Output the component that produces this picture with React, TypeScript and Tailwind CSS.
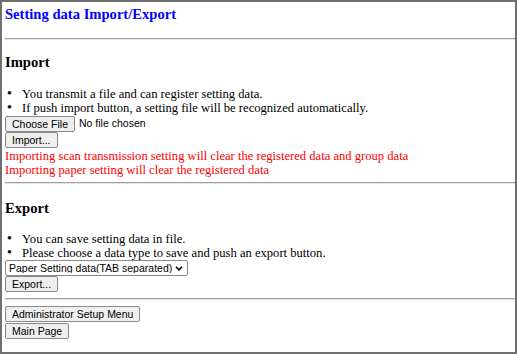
// Setting data Import/Export page
const btn =
  "block h-[16px] px-[6px] bg-[#efefef] border border-[#8a8a8a] rounded-[2px] text-[10.5px] leading-none text-black font-['Liberation_Sans',Arial,sans-serif]";

const Rule = () => <div className="h-0 border-t border-t-[#a0a0a0] border-b border-b-[#e4e4e4]" />;

const Bullets = ({ items }: { items: string[] }) => (
  <ul>
    {items.map((t) => (
      <li key={t} className="flex h-[14px] leading-[14px]">
        <span className="w-[17px] pl-[2px] text-[14px]">•</span>
        <span>{t}</span>
      </li>
    ))}
  </ul>
);

const App = () => {
  return (
    <div className="w-[517px] h-[354px] overflow-hidden bg-white border-2 border-[#6f6f6f] pl-[3px] text-[12.6px] text-black font-['Liberation_Serif','Times_New_Roman',serif]">
      {/* Page title */}
      <h1 className="mt-[4px] h-[17px] leading-[17px] text-[14.6px] font-bold text-[#0000ff]">
        Setting data Import/Export
      </h1>
      <div className="mt-[15px]">
        <Rule />
      </div>

      {/* Import section */}
      <h2 className="mt-[14px] h-[17px] leading-[17px] text-[14.6px] font-bold">Import</h2>
      <div className="mt-[16px]">
        <Bullets
          items={[
            "You transmit a file and can register setting data.",
            "If push import button, a setting file will be recognized automatically.",
          ]}
        />
      </div>
      <div className="mt-[1px] flex items-center gap-[4px]">
        <button className={btn}>Choose File</button>
        <span className="text-[10.5px] font-['Liberation_Sans',Arial,sans-serif]">No file chosen</span>
      </div>
      <button className={btn}>Import...</button>
      <div className="mt-[1px] text-[#ff0000] leading-[14px]">
        <p>Importing scan transmission setting will clear the registered data and group data</p>
        <p>Importing paper setting will clear the registered data</p>
      </div>
      <div className="mt-[5px]">
        <Rule />
      </div>

      {/* Export section */}
      <h2 className="mt-[16px] h-[17px] leading-[17px] text-[14.6px] font-bold">Export</h2>
      <div className="mt-[15px]">
        <Bullets
          items={[
            "You can save setting data in file.",
            "Please choose a data type to save and push an export button.",
          ]}
        />
      </div>
      <div className="relative mt-0 w-[183px]">
        <select className="block w-[183px] h-[16px] pl-[3px] appearance-none bg-white border border-[#8a8a8a] rounded-[2px] text-[10.5px] leading-none font-['Liberation_Sans',Arial,sans-serif]">
          <option>Paper Setting data(TAB separated)</option>
          <option>Scan Transmission data</option>
        </select>
        <svg
          className="absolute right-[5px] top-[6px] pointer-events-none"
          width="8"
          height="5"
          viewBox="0 0 8 5"
        >
          <path d="M1 0.8 L4 3.8 L7 0.8" fill="none" stroke="#000" strokeWidth="1.6" />
        </svg>
      </div>
      <button className={btn}>Export...</button>
      <div className="mt-[6px]">
        <Rule />
      </div>

      {/* Navigation */}
      <div className="mt-[6px] flex flex-col items-start gap-[1px]">
        <button className={btn}>Administrator Setup Menu</button>
        <button className={btn}>Main Page</button>
      </div>
    </div>
  );
};

export default App;
